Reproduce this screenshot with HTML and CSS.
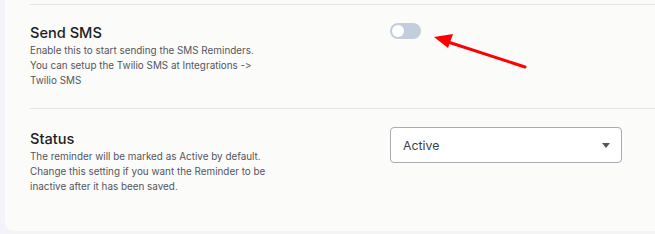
FILE: index.html
```html
<!DOCTYPE html>
<html>
<head>
<meta charset="utf-8">
<link rel="stylesheet" href="styles.css">
</head>
<body>
<div class="card">
  <div class="row row-sms">
    <div class="info">
      <div class="title">Send SMS</div>
      <div class="desc">Enable this to start sending the SMS Reminders.<br>You can setup the Twilio SMS at Integrations -&gt;<br>Twilio SMS</div>
    </div>
    <div class="control">
      <span class="toggle"><span class="knob"></span></span>
    </div>
  </div>
  <div class="row row-status">
    <div class="info">
      <div class="title">Status</div>
      <div class="desc">The reminder will be marked as Active by default.<br>Change this setting if you want the Reminder to be<br>inactive after it has been saved.</div>
    </div>
    <div class="control">
      <div class="select"><span class="value">Active</span><span class="caret"></span></div>
    </div>
  </div>
  <svg class="arrow" width="120" height="50" viewBox="0 0 120 50">
    <line x1="104" y1="41" x2="24" y2="15" stroke="#ff0000" stroke-width="3" stroke-linecap="round"/>
    <polygon points="13,11 32,8 27,22" fill="#ff0000"/>
  </svg>
</div>
</body>
</html>
```

FILE: styles.css
```css
* { box-sizing: border-box; }
html, body { margin: 0; padding: 0; }
body {
  background: #f3f3f9;
  width: 655px;
  height: 234px;
  overflow: hidden;
  font-family: "Inter", "Liberation Sans", sans-serif;
  font-variant-ligatures: none;
  font-feature-settings: "calt" 0, "liga" 0;
}
.card {
  position: relative;
  margin-left: 5px;
  height: 231px;
  background: #fbfbfa;
  border-bottom-left-radius: 9px;
  padding-left: 25px;
  padding-top: 4px;
}
.row {
  display: grid;
  grid-template-columns: 360px 1fr;
  border-top: 1px solid #e4e4e4;
}
.row-sms { padding-top: 18px; height: 104px; }
.row-status { padding-top: 20px; }
.title {
  font-size: 14.6px;
  line-height: 20px;
  font-weight: 500;
  color: #1d1d22;
}
.desc {
  font-size: 9.9px;
  line-height: 15px;
  color: #55555c;
}
.toggle {
  display: block;
  width: 31px;
  height: 16px;
  border-radius: 8px;
  background: #c3cedc;
  padding: 2px;
}
.knob {
  display: block;
  width: 12px;
  height: 12px;
  border-radius: 50%;
  background: #ffffff;
}
.select {
  margin-top: -2px;
  width: 232px;
  height: 36px;
  border: 1px solid #a9abae;
  border-radius: 4px;
  background: #ffffff;
  display: flex;
  align-items: center;
  justify-content: space-between;
  padding: 0 11px 0 12px;
}
.value {
  font-size: 12.3px;
  color: #3d3d44;
}
.caret {
  width: 0;
  height: 0;
  border-left: 4px solid transparent;
  border-right: 4px solid transparent;
  border-top: 5px solid #55555a;
}
.arrow {
  position: absolute;
  left: 416px;
  top: 26px;
}
```
